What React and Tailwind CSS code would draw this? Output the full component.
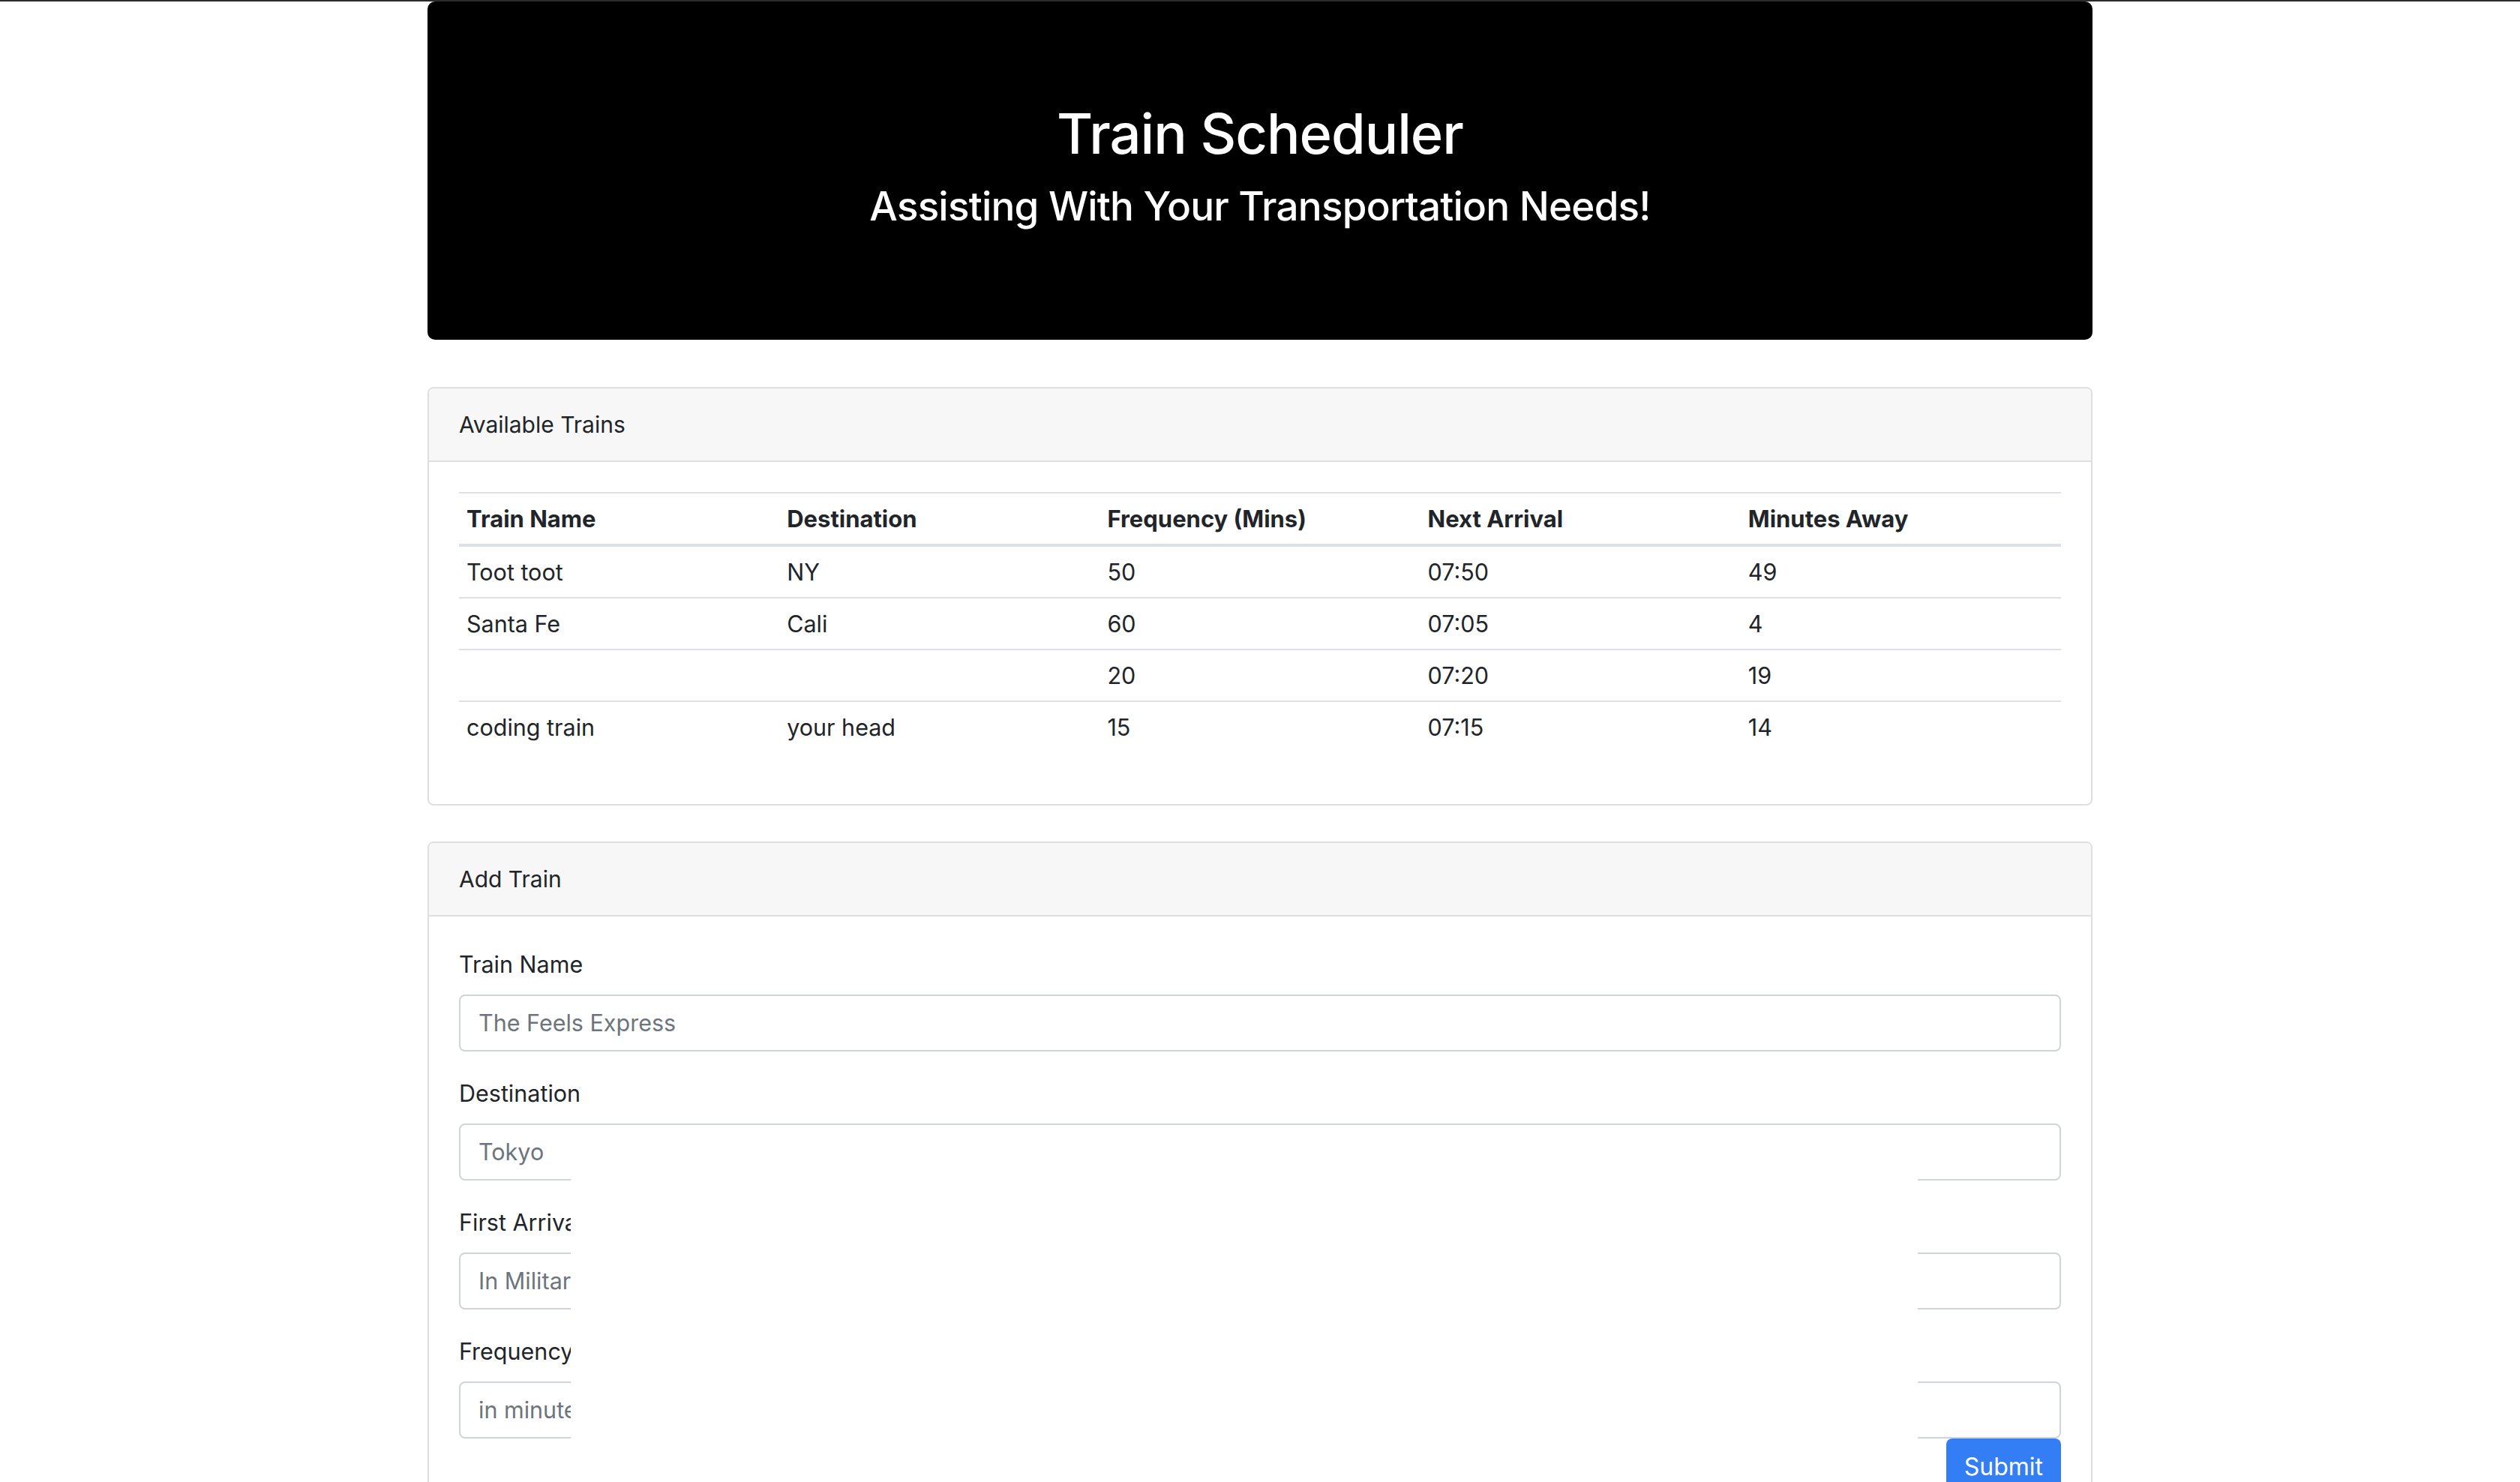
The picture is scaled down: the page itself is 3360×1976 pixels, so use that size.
import React from "react";

const rows = [
  ["Toot toot", "NY", "50", "07:50", "49"],
  ["Santa Fe", "Cali", "60", "07:05", "4"],
  ["", "", "20", "07:20", "19"],
  ["coding train", "your head", "15", "07:15", "14"],
];

const fields = [
  ["Train Name", "The Feels Express"],
  ["Destination", "Tokyo"],
  ["First Arrival", "In Military Time"],
  ["Frequency", "in minutes"],
];

export default function App() {
  return (
    <div
      className="relative h-[1976px] overflow-hidden bg-white text-[#212529]"
      style={{ fontFamily: "Inter, 'Noto Sans', sans-serif" }}
    >
      <div className="h-[2px] bg-[#2c2c2c]" />
      <div className="w-[2220px] mx-auto">
        <div className="bg-black text-white rounded-[10px] px-[64px] pt-[128px] pb-[128px] mb-[63px] text-center">
          <h1 className="text-[74px] leading-[96px] font-medium mb-[16px] tracking-[-1px]">
            Train Scheduler
          </h1>
          <h3 className="text-[53px] leading-[67px] font-medium mb-[16px] tracking-[-0.8px]">
            Assisting With Your Transportation Needs!
          </h3>
        </div>

        <div className="border-2 border-[#dfdfdf] rounded-[8px] mb-[48px]">
          <div className="bg-[#f7f7f7] border-b-2 border-[#dfdfdf] px-[40px] py-[24px] text-[30px] leading-[48px] rounded-t-[6px]">
            Available Trains
          </div>
          <div className="p-[40px]">
            <table className="w-full table-fixed border-collapse mb-[29px] text-[30.5px] leading-[48px]">
              <thead>
                <tr>
                  {["Train Name", "Destination", "Frequency (Mins)", "Next Arrival", "Minutes Away"].map((h) => (
                    <th
                      key={h}
                      className="text-left font-bold text-[31px] px-[10px] py-[9.5px] border-t-2 border-b-4 border-[#dee2e6]"
                    >
                      {h}
                    </th>
                  ))}
                </tr>
              </thead>
              <tbody>
                {rows.map((r, i) => (
                  <tr key={i}>
                    {r.map((c, j) => (
                      <td
                        key={j}
                        className={
                          "px-[10px] py-[9.5px] " + (i > 0 ? "border-t-2 border-[#dee2e6]" : "")
                        }
                      >
                        {c}
                      </td>
                    ))}
                  </tr>
                ))}
              </tbody>
            </table>
          </div>
        </div>

        <div className="border-2 border-[#dfdfdf] rounded-[8px]">
          <div className="bg-[#f7f7f7] border-b-2 border-[#dfdfdf] px-[40px] py-[24px] text-[30px] leading-[48px] rounded-t-[6px]">
            Add Train
          </div>
          <div className="p-[40px]">
            {fields.map(([label, ph], i) => (
              <div key={label} className={i < fields.length - 1 ? "mb-[32px]" : ""}>
                <div className="text-[30.5px] leading-[48px] mb-[16px]">{label}</div>
                <div className="h-[76px] border-2 border-[#ced4da] rounded-[8px] px-[24px] flex items-center text-[30.5px] text-[#6c757d] bg-white">
                  {ph}
                </div>
              </div>
            ))}
            <div className="flex justify-end">
              <button className="h-[76px] px-[24px] rounded-[8px] bg-[#347ef5] text-white text-[32px] leading-[48px]">
                Submit
              </button>
            </div>
          </div>
        </div>
      </div>
      <div className="absolute left-[761px] top-[1560px] w-[1796px] h-[420px] bg-white" />
    </div>
  );
}
